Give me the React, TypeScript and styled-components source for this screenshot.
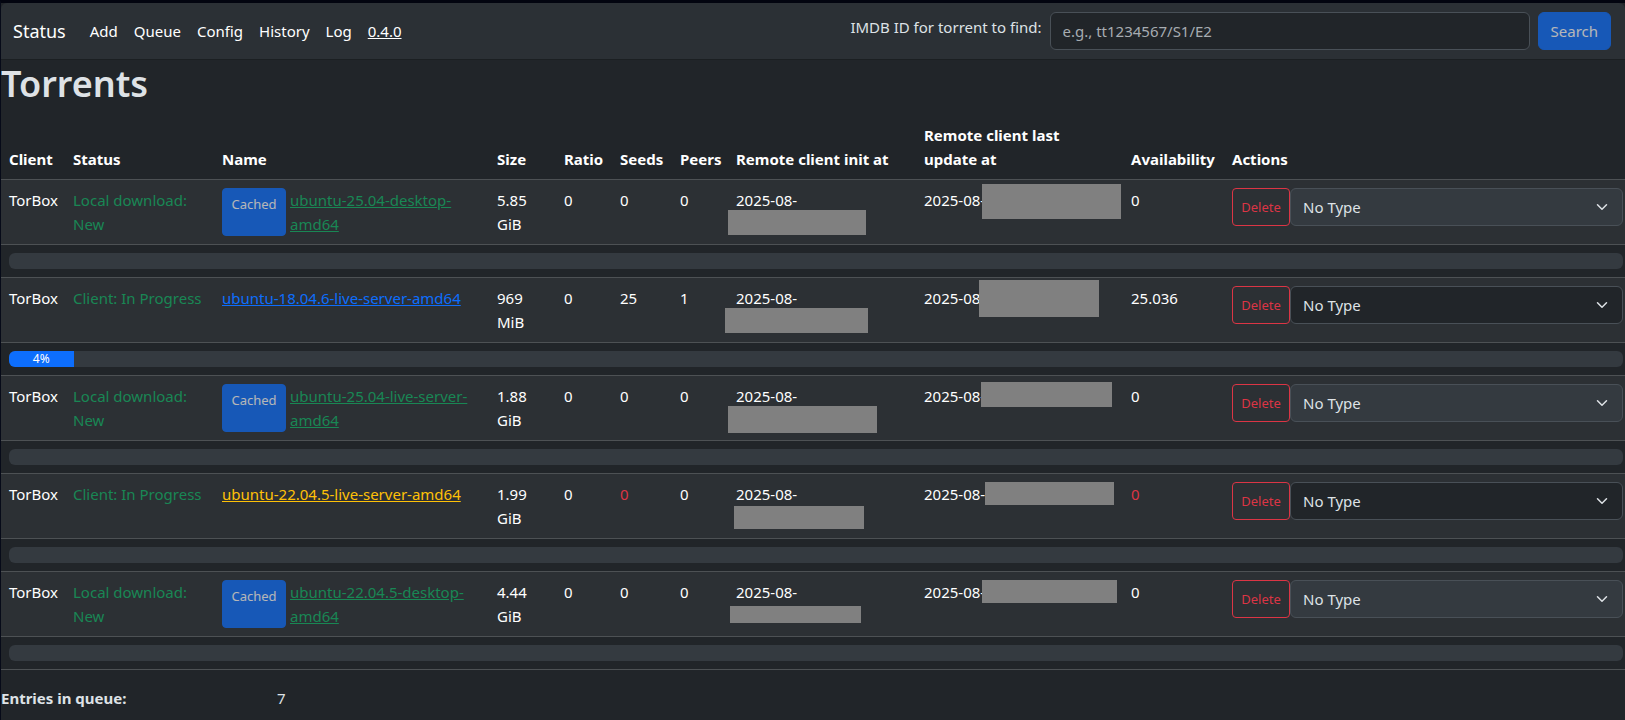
import React from 'react';
import styled, { createGlobalStyle, css } from 'styled-components';

const font = `'Noto Sans', 'Open Sans', sans-serif`;

const GlobalStyle = createGlobalStyle`
  *, *::before, *::after { box-sizing: border-box; }
  html { min-height: 100%; background: #212529; }
  body {
    margin: 0;
    font-family: ${font};
    font-size: 15px;
    line-height: 24px;
    color: #dee2e6;
  }
  button, input, select { font: inherit; }
`;

const Page = styled.div`
  min-height: 100vh;
  border-top: 3px solid #02040f;
  border-left: 1px solid #060a18;
  background: #212529;
  overflow: hidden;
`;

const Navbar = styled.nav`
  display: flex;
  align-items: center;
  height: 57px;
  padding: 0 14px 0 12px;
  background: #2b3035;
  border-bottom: 1px solid #1b1f22;
  border-top-left-radius: 6px;
  border-top-right-radius: 6px;
`;

const Brand = styled.a`
  margin-right: 16px;
  font-size: 18px;
  line-height: 30px;
  color: #fff;
  text-decoration: none;
`;

const NavList = styled.ul`
  display: flex;
  margin: 0;
  padding: 0;
  list-style: none;
`;

const NavLink = styled.a<{ $underlined?: boolean }>`
  display: block;
  padding: 8px;
  color: #fff;
  text-decoration: ${(p) => (p.$underlined ? 'underline' : 'none')};
`;

const SearchForm = styled.form`
  display: flex;
  align-items: center;
  gap: 8px;
  margin-left: auto;
`;

const SearchLabel = styled.label`
  margin-bottom: 8px;
  white-space: nowrap;
`;

const SearchInput = styled.input`
  width: 480px;
  height: 38px;
  padding: 6px 12px;
  color: #dee2e6;
  background: #212529;
  border: 1px solid #495057;
  border-radius: 6px;
  &::placeholder { color: #a7acb1; opacity: 1; }
`;

const PrimaryButton = styled.button<{ $small?: boolean }>`
  flex: none;
  padding: 6px 12px;
  color: #fff;
  background: #0d6efd;
  border: 1px solid #0d6efd;
  border-radius: 6px;
  &:disabled { opacity: 0.65; }
  ${(p) =>
    p.$small &&
    css`
      display: flex;
      align-items: flex-start;
      justify-content: center;
      min-width: 64px;
      padding: 4px 8px;
      font-size: 13px;
      line-height: 22px;
      border-radius: 4px;
    `}
`;

const Title = styled.h1`
  margin: 0 0 8px;
  font-size: 36px;
  font-weight: 600;
  line-height: 48px;
`;

const TorrentTable = styled.table`
  width: 100%;
  margin-bottom: 16px;
  table-layout: fixed;
  border-spacing: 0;
  color: #fff;
`;

const Column = styled.col<{ $width?: number }>`
  width: ${(p) => (p.$width ? `${p.$width}px` : 'auto')};
`;

const HeadCell = styled.th`
  padding: 7px 8px 8px;
  text-align: left;
  vertical-align: bottom;
  border-bottom: 1px solid #4d5154;
  &:nth-child(-n + 7) { white-space: nowrap; }
`;

const Cell = styled.td<{ $danger?: boolean }>`
  position: relative;
  padding: 8px;
  vertical-align: top;
  color: ${(p) => (p.$danger ? '#dc3545' : '#fff')};
  background: #2c3034;
  border-bottom: 1px solid #4d5154;
  &:last-child { padding-right: 2px; }
`;

const StatusCell = styled(Cell)`
  color: #198754;
`;

const ProgressCell = styled.td`
  padding: 8px 2px 8px 8px;
  border-bottom: 1px solid #4d5154;
`;

const Split = styled.div`
  display: flex;
  gap: 4px;
`;

const tones = { success: '#198754', primary: '#0d6efd', warning: '#ffc107' };

const TorrentLink = styled.a<{ $tone: keyof typeof tones }>`
  color: ${(p) => tones[p.$tone]};
`;

const Actions = styled.div`
  display: flex;
`;

const DeleteButton = styled.button`
  flex: none;
  width: 58px;
  padding: 4px 8px;
  font-size: 13px;
  color: #dc3545;
  background: transparent;
  border: 1px solid #dc3545;
  border-radius: 4px;
`;

const SelectWrap = styled.div`
  position: relative;
  flex: 1;
`;

const TypeSelect = styled.select`
  display: block;
  width: 100%;
  height: 38px;
  padding: 6px 36px 6px 12px;
  color: #dee2e6;
  background: #212529;
  border: 1px solid #495057;
  border-radius: 6px;
  appearance: none;
  &:disabled { background: #343a40; opacity: 1; }
`;

const Chevron = styled.svg`
  position: absolute;
  top: 13px;
  right: 13px;
  width: 16px;
  height: 12px;
  pointer-events: none;
`;

const Track = styled.div`
  display: flex;
  height: 16px;
  overflow: hidden;
  background: #343a40;
  border-radius: 6px;
`;

const Fill = styled.div`
  font-size: 12px;
  line-height: 16px;
  text-align: center;
  color: #fff;
  background: #0d6efd;
`;

const Redaction = styled.span<{ $box: Box }>`
  position: absolute;
  left: ${(p) => p.$box[0]}px;
  top: ${(p) => p.$box[1]}px;
  width: ${(p) => p.$box[2]}px;
  height: ${(p) => p.$box[3]}px;
  background: #808080;
`;

const Summary = styled.dl`
  display: flex;
  margin: 0;
`;

const Term = styled.dt`
  width: 17%;
  font-weight: 700;
`;

const Value = styled.dd`
  margin: 0;
`;

/* left, top, width, height of a redaction inside its cell */
type Box = [number, number, number, number];

interface Torrent {
  status: string;
  name: string;
  tone: keyof typeof tones;
  cached: boolean;
  size: string;
  seeds: string;
  peers: string;
  availability: string;
  progress: number;
  initBox: Box;
  updateBox: Box;
}

const torrents: Torrent[] = [
  {
    status: 'Local download: New', name: 'ubuntu-25.04-desktop-amd64', tone: 'success', cached: true,
    size: '5.85 GiB', seeds: '0', peers: '0', availability: '0', progress: 0,
    initBox: [0, 30, 138, 25], updateBox: [66, 4, 139, 35],
  },
  {
    status: 'Client: In Progress', name: 'ubuntu-18.04.6-live-server-amd64', tone: 'primary', cached: false,
    size: '969 MiB', seeds: '25', peers: '1', availability: '25.036', progress: 4,
    initBox: [-3, 30, 143, 25], updateBox: [63, 2, 120, 37],
  },
  {
    status: 'Local download: New', name: 'ubuntu-25.04-live-server-amd64', tone: 'success', cached: true,
    size: '1.88 GiB', seeds: '0', peers: '0', availability: '0', progress: 0,
    initBox: [0, 30, 149, 27], updateBox: [65, 6, 131, 25],
  },
  {
    status: 'Client: In Progress', name: 'ubuntu-22.04.5-live-server-amd64', tone: 'warning', cached: false,
    size: '1.99 GiB', seeds: '0', peers: '0', availability: '0', progress: 0,
    initBox: [6, 32, 130, 23], updateBox: [69, 8, 129, 23],
  },
  {
    status: 'Local download: New', name: 'ubuntu-22.04.5-desktop-amd64', tone: 'success', cached: true,
    size: '4.44 GiB', seeds: '0', peers: '0', availability: '0', progress: 0,
    initBox: [2, 34, 131, 17], updateBox: [66, 8, 135, 23],
  },
];

const columns: { title: string; width?: number }[] = [
  { title: 'Client', width: 64 },
  { title: 'Status', width: 149 },
  { title: 'Name', width: 275 },
  { title: 'Size', width: 67 },
  { title: 'Ratio', width: 56 },
  { title: 'Seeds', width: 60 },
  { title: 'Peers', width: 56 },
  { title: 'Remote client init at', width: 188 },
  { title: 'Remote client last update at', width: 207 },
  { title: 'Availability', width: 101 },
  { title: 'Actions' },
];

const navItems = ['Add', 'Queue', 'Config', 'History', 'Log'];

function TorrentRows({ torrent: t }: { torrent: Torrent }) {
  const stalled = t.tone === 'warning';
  const link = <TorrentLink href="#" $tone={t.tone}>{t.name}</TorrentLink>;
  return (
    <>
      <tr>
        <Cell>TorBox</Cell>
        <StatusCell>{t.status}</StatusCell>
        <Cell>
          {t.cached ? (
            <Split>
              <PrimaryButton type="button" $small disabled>Cached</PrimaryButton>
              {link}
            </Split>
          ) : link}
        </Cell>
        <Cell>{t.size}</Cell>
        <Cell>0</Cell>
        <Cell $danger={stalled}>{t.seeds}</Cell>
        <Cell>{t.peers}</Cell>
        <Cell>2025-08-<Redaction $box={t.initBox} /></Cell>
        <Cell>2025-08-<Redaction $box={t.updateBox} /></Cell>
        <Cell $danger={stalled}>{t.availability}</Cell>
        <Cell>
          <Actions>
            <DeleteButton type="button">Delete</DeleteButton>
            <SelectWrap>
              <TypeSelect aria-label={`Type of ${t.name}`} disabled={t.cached}>
                <option>No Type</option>
              </TypeSelect>
              <Chevron viewBox="0 0 16 16" aria-hidden="true">
                <path d="m2 5 6 6 6-6" fill="none" stroke="#dee2e6" strokeWidth="2" strokeLinecap="round" strokeLinejoin="round" />
              </Chevron>
            </SelectWrap>
          </Actions>
        </Cell>
      </tr>
      <tr>
        <ProgressCell colSpan={columns.length}>
          <Track role="progressbar" aria-label={`Progress of ${t.name}`} aria-valuenow={t.progress} aria-valuemin={0} aria-valuemax={100}>
            {t.progress > 0 && <Fill style={{ width: `${t.progress}%` }}>{t.progress}%</Fill>}
          </Track>
        </ProgressCell>
      </tr>
    </>
  );
}

export default function App() {
  return (
    <Page>
      <GlobalStyle />
      <Navbar>
        <Brand href="#">Status</Brand>
        <NavList>
          {navItems.map((item) => (
            <li key={item}><NavLink href="#">{item}</NavLink></li>
          ))}
          <li><NavLink href="#" $underlined>0.4.0</NavLink></li>
        </NavList>
        <SearchForm>
          <SearchLabel htmlFor="imdb">IMDB ID for torrent to find:</SearchLabel>
          <SearchInput id="imdb" type="text" placeholder="e.g., tt1234567/S1/E2" />
          <PrimaryButton type="submit" disabled>Search</PrimaryButton>
        </SearchForm>
      </Navbar>
      <main>
        <Title>Torrents</Title>
        <TorrentTable>
          <colgroup>
            {columns.map((c) => <Column key={c.title} $width={c.width} />)}
          </colgroup>
          <thead>
            <tr>{columns.map((c) => <HeadCell key={c.title} scope="col">{c.title}</HeadCell>)}</tr>
          </thead>
          <tbody>
            {torrents.map((t) => <TorrentRows key={t.name} torrent={t} />)}
          </tbody>
        </TorrentTable>
        <Summary>
          <Term>Entries in queue:</Term>
          <Value>7</Value>
        </Summary>
      </main>
    </Page>
  );
}
